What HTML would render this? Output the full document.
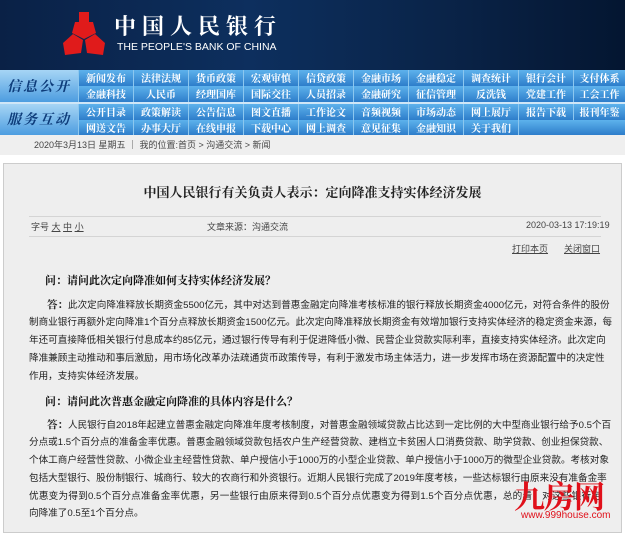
<!DOCTYPE html>
<html><head><meta charset="utf-8"><style>
*{margin:0;padding:0;box-sizing:border-box}
body{width:625px;height:526px;overflow:hidden;background:#fff;font-family:"Liberation Sans","Noto Sans CJK SC",sans-serif;position:relative}
#hd{position:absolute;left:0;top:0;width:625px;height:70px;background:linear-gradient(90deg,#0a2146 0%,#0d2f5e 40%,#0a2449 70%,#041631 100%)}
#hd .cn{position:absolute;left:114px;top:13px;color:#fff;font-family:"Noto Serif CJK SC",serif;font-size:22px;letter-spacing:6px;font-weight:bold;line-height:26px}
#hd .en{position:absolute;left:117px;top:41px;color:#fff;font-size:10.5px;line-height:12px}
.nav{position:absolute;left:0;width:625px;height:32px}
.nav .lab{position:absolute;left:0;top:0;width:78px;height:32px;background:linear-gradient(180deg,#a6d5f5,#4d9de0);color:#0e3c7a;font-style:italic;font-weight:bold;font-size:14px;line-height:32px;text-align:center;letter-spacing:2px;font-family:"Noto Serif CJK SC",serif}
.nav .it{position:absolute;height:16px;width:55px;background:linear-gradient(180deg,#5db2ec,#2d7dca);color:#fff;font-size:10px;font-weight:bold;line-height:16px;text-align:center;border-left:1px solid #8cc7ef;font-family:"Noto Serif CJK SC",serif}
#bc{position:absolute;left:0;top:135px;width:625px;height:20px;background:#efefef;font-size:9px;color:#444;line-height:20px;padding-left:34px}
#box{position:absolute;left:3px;top:163px;width:619px;height:370px;border:1px solid #ccc;background:#eeeeee;overflow:hidden}
#box .t{position:absolute;left:0;top:18px;width:617px;text-align:center;font-size:13px;font-weight:bold;color:#222;font-family:"Noto Serif CJK SC",serif}
.ln{position:absolute;left:25px;width:572px;height:1px;background:#d4d4d4}
.meta{position:absolute;top:56px;font-size:9px;color:#444}
.lk{position:absolute;top:78px;font-size:9px;color:#444;text-decoration:underline}
.q{position:absolute;left:41px;font-size:11px;font-weight:bold;color:#111;font-family:"Noto Serif CJK SC",serif}
.l{position:absolute;left:25px;width:572px;font-size:9.6px;line-height:14px;color:#222;text-align:justify;text-align-last:justify;white-space:nowrap}
.l.f{left:43px;width:554px}
.l.e{text-align-last:left}
.l b{font-family:"Noto Serif CJK SC",serif;font-size:10.5px}
#wm{position:absolute;left:514px;top:478px;color:#e0101a;font-size:31px;font-weight:bold;line-height:34px;letter-spacing:-1px;font-family:"Noto Serif CJK SC",serif}
#wm2{position:absolute;left:521px;top:510px;color:#e0101a;font-size:10px}
</style></head><body>
<div id="hd">
<svg style="position:absolute;left:58px;top:10px" width="52" height="48" viewBox="0 0 52 48"><g fill="#e01b1b"><rect x="21" y="2" width="10" height="10"/><path d="M17 12h18l3 11-12 6-12-6z"/><path d="M5 33l10-9 10 6-2 13-16 2z"/><path d="M47 33l-10-9-10 6 2 13 16 2z"/></g></svg>
<div class="cn">中国人民银行</div>
<div class="en">THE PEOPLE'S BANK OF CHINA</div>
</div>
<div class="nav" style="top:70px"><div class="lab">信息公开</div>
<div class="it" style="left:78px;top:0">新闻发布</div><div class="it" style="left:133px;top:0">法律法规</div><div class="it" style="left:188px;top:0">货币政策</div><div class="it" style="left:243px;top:0">宏观审慎</div><div class="it" style="left:298px;top:0">信贷政策</div><div class="it" style="left:353px;top:0">金融市场</div><div class="it" style="left:408px;top:0">金融稳定</div><div class="it" style="left:463px;top:0">调查统计</div><div class="it" style="left:518px;top:0">银行会计</div><div class="it" style="left:573px;top:0;width:52px">支付体系</div>
<div class="it" style="left:78px;top:16px">金融科技</div><div class="it" style="left:133px;top:16px">人民币</div><div class="it" style="left:188px;top:16px">经理国库</div><div class="it" style="left:243px;top:16px">国际交往</div><div class="it" style="left:298px;top:16px">人员招录</div><div class="it" style="left:353px;top:16px">金融研究</div><div class="it" style="left:408px;top:16px">征信管理</div><div class="it" style="left:463px;top:16px">反洗钱</div><div class="it" style="left:518px;top:16px">党建工作</div><div class="it" style="left:573px;top:16px;width:52px">工会工作</div>
</div>
<div style="position:absolute;left:0;top:102px;width:625px;height:2px;background:#cfe6f7"></div>
<div class="nav" style="top:104px;height:31px"><div class="lab" style="height:31px;line-height:31px">服务互动</div>
<div class="it" style="left:78px;top:0">公开目录</div><div class="it" style="left:133px;top:0">政策解读</div><div class="it" style="left:188px;top:0">公告信息</div><div class="it" style="left:243px;top:0">图文直播</div><div class="it" style="left:298px;top:0">工作论文</div><div class="it" style="left:353px;top:0">音频视频</div><div class="it" style="left:408px;top:0">市场动态</div><div class="it" style="left:463px;top:0">网上展厅</div><div class="it" style="left:518px;top:0">报告下载</div><div class="it" style="left:573px;top:0;width:52px">报刊年鉴</div>
<div class="it" style="left:78px;top:16px;height:15px">网送文告</div><div class="it" style="left:133px;top:16px;height:15px">办事大厅</div><div class="it" style="left:188px;top:16px;height:15px">在线申报</div><div class="it" style="left:243px;top:16px;height:15px">下载中心</div><div class="it" style="left:298px;top:16px;height:15px">网上调查</div><div class="it" style="left:353px;top:16px;height:15px">意见征集</div><div class="it" style="left:408px;top:16px;height:15px">金融知识</div><div class="it" style="left:463px;top:16px;height:15px">关于我们</div><div class="it" style="left:518px;top:16px;height:15px;width:107px"></div>
</div>
<div id="bc">2020年3月13日 星期五 ｜ 我的位置:首页 &gt; 沟通交流 &gt; 新闻</div>
<div id="box">
<div class="t">中国人民银行有关负责人表示：定向降准支持实体经济发展</div>
<div class="ln" style="top:52px"></div>
<div class="meta" style="left:27px">字号 <u>大</u> <u>中</u> <u>小</u></div>
<div class="meta" style="left:203px">文章来源：沟通交流</div>
<div class="meta" style="left:522px">2020-03-13 17:19:19</div>
<div class="ln" style="top:72px"></div>
<div class="lk" style="left:508px">打印本页</div><div class="lk" style="left:560px">关闭窗口</div>
<div class="q" style="top:108px">问：请问此次定向降准如何支持实体经济发展？</div>
<div class="l f" style="top:134px"><b>答：</b>此次定向降准释放长期资金5500亿元，其中对达到普惠金融定向降准考核标准的银行释放长期资金4000亿元，对符合条件的股份</div>
<div class="l" style="top:152px">制商业银行再额外定向降准1个百分点释放长期资金1500亿元。此次定向降准释放长期资金有效增加银行支持实体经济的稳定资金来源，每</div>
<div class="l" style="top:170px">年还可直接降低相关银行付息成本约85亿元，通过银行传导有利于促进降低小微、民营企业贷款实际利率，直接支持实体经济。此次定向</div>
<div class="l" style="top:188px">降准兼顾主动推动和事后激励，用市场化改革办法疏通货币政策传导，有利于激发市场主体活力，进一步发挥市场在资源配置中的决定性</div>
<div class="l e" style="top:206px">作用，支持实体经济发展。</div>
<div class="q" style="top:229px">问：请问此次普惠金融定向降准的具体内容是什么？</div>
<div class="l f" style="top:254px"><b>答：</b>人民银行自2018年起建立普惠金融定向降准年度考核制度，对普惠金融领域贷款占比达到一定比例的大中型商业银行给予0.5个百</div>
<div class="l" style="top:272px">分点或1.5个百分点的准备金率优惠。普惠金融领域贷款包括农户生产经营贷款、建档立卡贫困人口消费贷款、助学贷款、创业担保贷款、</div>
<div class="l" style="top:290px">个体工商户经营性贷款、小微企业主经营性贷款、单户授信小于1000万的小型企业贷款、单户授信小于1000万的微型企业贷款。考核对象</div>
<div class="l" style="top:308px">包括大型银行、股份制银行、城商行、较大的农商行和外资银行。近期人民银行完成了2019年度考核，一些达标银行由原来没有准备金率</div>
<div class="l" style="top:326px">优惠变为得到0.5个百分点准备金率优惠，另一些银行由原来得到0.5个百分点优惠变为得到1.5个百分点优惠，总的看，对这些银行定</div>
<div class="l e" style="top:343px">向降准了0.5至1个百分点。</div>
</div>
<div id="wm">九房网</div>
<div id="wm2">www.999house.com</div>
</body></html>
